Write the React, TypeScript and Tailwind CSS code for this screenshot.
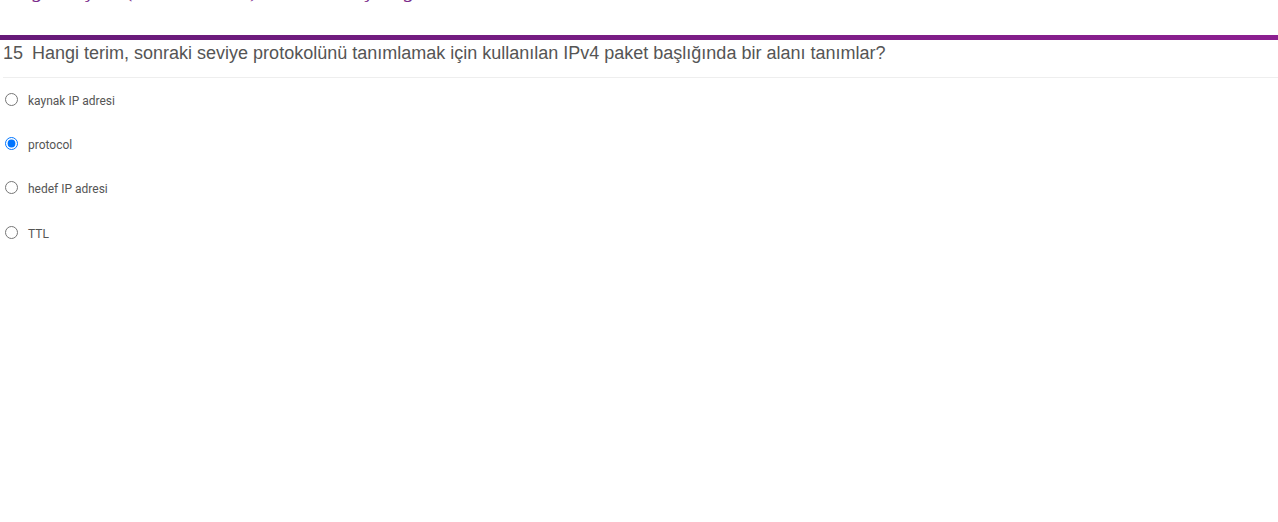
import React, { useState } from 'react';

const options = ['kaynak IP adresi', 'protocol', 'hedef IP adresi', 'TTL'];

export default function App() {
  const [selected, setSelected] = useState(1);

  return (
    <div className="w-[1278px] h-[522px] bg-white overflow-hidden font-['Liberation_Sans',Arial,sans-serif]">
      {/* kesilmiş başlık */}
      <div className="h-[35px] overflow-hidden">
        <h1 className="mt-[-23px] pl-[8px] text-[22px] leading-[26px] italic text-[#7a2a8a] font-['Liberation_Serif',serif] whitespace-nowrap">
          Bag İletişimi (Modül 8 – 10) Sınav Sonuç Bilgi
        </h1>
      </div>
      <div className="h-[5px] bg-gradient-to-r from-[#661a78] to-[#8c1f90]" />
      <div className="pl-[3px] pt-[3px]">
        <div className="h-[35px] flex items-start text-[18px] leading-[20px] text-[#555] border-b border-[#eee]">
          <span className="mr-[9px]">15</span>
          <span>Hangi terim, sonraki seviye protokolünü tanımlamak için kullanılan IPv4 paket başlığında bir alanı tanımlar?</span>
        </div>
        <div className="pt-[13px] flex flex-col">
          {options.map((opt, i) => (
            <label key={opt} className={`${i === 2 ? 'h-[45px]' : 'h-[44px]'} flex items-start cursor-pointer`}>
              <input
                type="radio"
                name="q15"
                checked={selected === i}
                onChange={() => setSelected(i)}
                className="mt-[2px] ml-[2px] w-[13px] h-[13px] accent-[#0075ff]"
              />
              <span className="ml-[10px] mt-[3px] text-[12px] leading-[14px] text-[#555] font-['Roboto',Arial,sans-serif]">{opt}</span>
            </label>
          ))}
        </div>
      </div>
    </div>
  );
}
